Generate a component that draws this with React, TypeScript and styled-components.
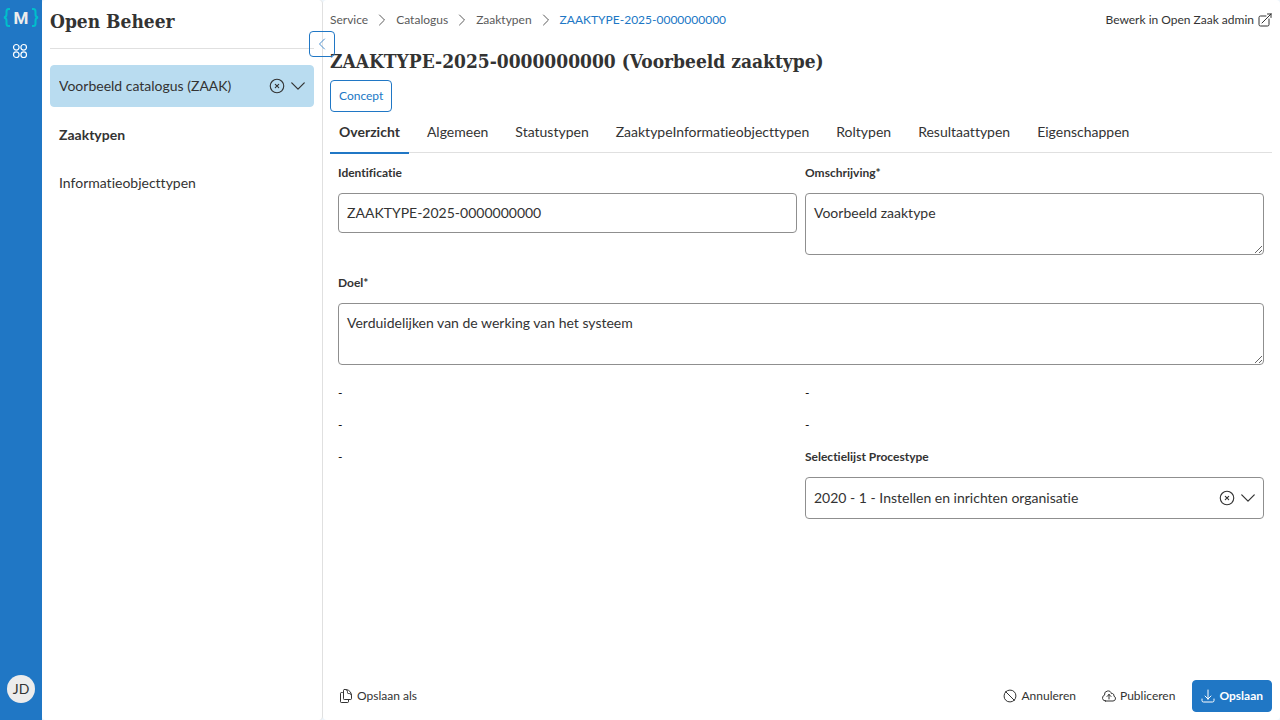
import React from "react";
import styled, { createGlobalStyle, css } from "styled-components";
import {
  HiOutlineArrowDownTray,
  HiOutlineArrowTopRightOnSquare,
  HiOutlineChevronDown,
  HiOutlineChevronLeft,
  HiOutlineChevronRight,
  HiOutlineCloudArrowUp,
  HiOutlineDocumentDuplicate,
  HiOutlineNoSymbol,
  HiOutlineXCircle,
} from "react-icons/hi2";

const color = {
  primary: "#2077c5",
  accent: "#00bfcb",
  selected: "#b9dcf0",
  text: "#333333",
  muted: "#5a5a5a",
  line: "#e0e0e0",
  border: "#8f8f8f",
};

const GlobalStyle = createGlobalStyle`
  *, *::before, *::after { box-sizing: border-box; }
  body {
    margin: 0;
    background: #eef5fb;
    color: ${color.text};
    font: 14px/20px Lato, "Liberation Sans", sans-serif;
    font-variant-ligatures: none;
  }
  button, input, select, textarea { font: inherit; font-variant-ligatures: none; color: inherit; }
  a { color: inherit; text-decoration: none; }
  svg { display: block; flex: none; }
`;

const Page = styled.div`
  display: flex;
  min-height: 100vh;
`;

const Rail = styled.nav`
  display: flex;
  flex-direction: column;
  align-items: center;
  flex: none;
  width: 42px;
  padding: 7px 0 17px;
  background: ${color.primary};
`;

const IconButton = styled.button`
  display: flex;
  padding: 0;
  border: 0;
  background: none;
  cursor: pointer;
`;

const AppsButton = styled(IconButton)`
  margin: 15px 2px 0 0;
  color: #fff;
`;

const Avatar = styled.button`
  width: 28px;
  height: 28px;
  margin-top: auto;
  padding: 0;
  border: 0;
  border-radius: 50%;
  background: #ececec;
  line-height: 28px;
`;

const Sidebar = styled.aside`
  position: relative;
  flex: none;
  width: 281px;
  padding: 8px;
  border-right: 1px solid ${color.line};
  border-radius: 4px;
  background: #fff;
`;

const headingFont = css`
  margin: 0;
  font: 700 19px/26px "Roboto Slab", "DejaVu Serif Condensed", "DejaVu Serif", serif;
`;

const Brand = styled.h2`
  ${headingFont}
  margin-bottom: 16px;
  padding-bottom: 14px;
  border-bottom: 1px solid ${color.line};
`;

const Collapse = styled.button`
  position: absolute;
  top: 31px;
  right: -13px;
  display: flex;
  align-items: center;
  justify-content: center;
  width: 26px;
  height: 26px;
  padding: 0;
  border: 1px solid ${color.primary};
  border-radius: 4px;
  background: transparent;
  color: #4a90d0;
`;

const SelectBox = styled.div<{ $filled?: boolean }>`
  display: flex;
  align-items: center;
  gap: 2px;
  height: 42px;
  padding: 0 5px 0 8px;
  border: 1px solid ${(p) => (p.$filled ? color.selected : color.border)};
  border-radius: 4px;
  background: ${(p) => (p.$filled ? color.selected : "#fff")};
`;

const Select = styled.select`
  flex: 1;
  min-width: 0;
  padding: 0;
  border: 0;
  appearance: none;
  background: transparent;
  outline: none;
`;

const SideNav = styled.nav`
  display: flex;
  flex-direction: column;
  gap: 8px;
`;

const SideLink = styled.a<{ $active?: boolean }>`
  padding: 10px 9px;
  font-weight: ${(p) => (p.$active ? 700 : 400)};
`;

const Main = styled.main`
  display: flex;
  flex-direction: column;
  flex: 1;
  min-width: 0;
  padding: 8px 8px 8px 7px;
  border-radius: 4px;
  background: #fff;
`;

const TopBar = styled.div`
  display: flex;
  align-items: center;
  justify-content: space-between;
  height: 24px;
  font-size: 12px;
`;

const Crumbs = styled.nav`
  display: flex;
  align-items: center;
  gap: 6px;
  color: ${color.muted};
`;

const Crumb = styled.a<{ $current?: boolean }>`
  color: ${(p) => (p.$current ? color.primary : "inherit")};
`;

const AdminLink = styled.a`
  display: flex;
  align-items: center;
  gap: 4px;
`;

/* The drawing of a 16px icon is inset, so its box is trimmed to 14px. */
const IconSlot = styled.span`
  display: flex;
  margin: 0 -1px;
`;

const Title = styled.h1`
  ${headingFont}
  margin-top: 16px;
`;

const Badge = styled.span`
  align-self: flex-start;
  margin-top: 6px;
  padding: 5px 8px;
  border: 1px solid ${color.primary};
  border-radius: 4px;
  color: ${color.primary};
  font-size: 12px;
`;

const Tabs = styled.div`
  display: flex;
  gap: 9px;
  height: 41px;
  border-bottom: 1px solid ${color.line};
`;

const Tab = styled.button<{ $active?: boolean }>`
  height: 42px;
  padding: 0 9px;
  border: 0;
  border-bottom: 2px solid ${(p) => (p.$active ? color.primary : "transparent")};
  background: none;
  font-weight: ${(p) => (p.$active ? 700 : 400)};
`;

const Form = styled.form`
  display: grid;
  grid-template-columns: 1fr 1fr;
  align-items: start;
  gap: 16px 8px;
  padding: 12px 8px;
`;

const Field = styled.div<{ $wide?: boolean; $multiline?: boolean }>`
  display: flex;
  flex-direction: column;
  gap: 12px;
  grid-column: ${(p) => (p.$wide ? "1 / -1" : "auto")};
  padding-bottom: ${(p) => (p.$multiline ? 4 : 0)}px;
`;

const Label = styled.label`
  font-size: 12px;
  font-weight: 700;
  line-height: 16px;
`;

const Empty = styled.span`
  color: #000;
  font-size: 12px;
  line-height: 16px;
`;

const control = css`
  width: 100%;
  padding: 8px;
  border: 1px solid ${color.border};
  border-radius: 4px;
  background: #fff;
  line-height: 22px;
  outline: none;
`;

const Input = styled.input`
  ${control}
  height: 40px;
  padding-bottom: 10px;
  line-height: 20px;
`;

const TextArea = styled.textarea`
  ${control}
  display: block;
  height: 62px;
`;

const Footer = styled.footer`
  display: flex;
  gap: 8px;
  margin-top: auto;
`;

const Spacer = styled.div`
  flex: 1;
`;

const Action = styled.button<{ $primary?: boolean }>`
  display: flex;
  align-items: center;
  gap: 4px;
  height: 32px;
  padding: 0 8px;
  border: 1px solid ${(p) => (p.$primary ? color.primary : "transparent")};
  border-radius: 4px;
  background: ${(p) => (p.$primary ? color.primary : "transparent")};
  color: ${(p) => (p.$primary ? "#fff" : color.text)};
  font-size: 12px;
  font-weight: ${(p) => (p.$primary ? 700 : 400)};
`;

const LogoLetter = styled.text`
  fill: #ececec;
  font: 700 17px Roboto, sans-serif;
  text-anchor: middle;
`;

const Logo = () => (
  <svg width="36" height="21" viewBox="0 0 36 21" fill="none" role="img" aria-label="Maykin">
    <g stroke={color.accent} strokeWidth="2">
      <path d="M7 2H5.500Q3.500 2 3.500 4.500v3Q3.500 10 1 10.500 3.500 11 3.500 13.500v3Q3.500 19 5.500 19H7" />
      <path d="M29 2h1.500q2 0 2 2.500v3q0 2.500 2.500 3-2.500.5-2.500 3v3q0 2.500-2 2.500H29" />
    </g>
    <LogoLetter x="18" y="17">
      M
    </LogoLetter>
  </svg>
);

const AppsIcon = () => (
  <svg width="16" height="16" viewBox="0 0 16 16" fill="none" stroke="currentColor" strokeWidth="1.200">
    <circle cx="4.300" cy="4.300" r="2.800" />
    <circle cx="11.700" cy="4.300" r="2.800" />
    <circle cx="4.300" cy="11.700" r="2.800" />
    <circle cx="11.700" cy="11.700" r="2.800" />
  </svg>
);

type PickerProps = { id: string; label?: string; value: string; filled?: boolean };

const Picker = ({ id, label, value, filled }: PickerProps) => (
  <SelectBox $filled={filled}>
    <Select id={id} aria-label={label} defaultValue={value}>
      <option>{value}</option>
    </Select>
    <IconButton type="button" aria-label="Wissen">
      <HiOutlineXCircle size={18} />
    </IconButton>
    <HiOutlineChevronDown size={20} />
  </SelectBox>
);

const tabs = [
  "Overzicht",
  "Algemeen",
  "Statustypen",
  "ZaaktypeInformatieobjecttypen",
  "Roltypen",
  "Resultaattypen",
  "Eigenschappen",
];

const parents = ["Service", "Catalogus", "Zaaktypen"];

export default function App() {
  return (
    <Page>
      <GlobalStyle />
      <Rail aria-label="Hoofdmenu">
        <Logo />
        <AppsButton aria-label="Applicaties">
          <AppsIcon />
        </AppsButton>
        <Avatar>JD</Avatar>
      </Rail>

      <Sidebar>
        <Brand>Open Beheer</Brand>
        <Collapse aria-label="Zijbalk inklappen">
          <HiOutlineChevronLeft size={16} />
        </Collapse>
        <SideNav aria-label="Catalogus">
          <Picker id="catalogus" label="Catalogus" value="Voorbeeld catalogus (ZAAK)" filled />
          <SideLink href="#zaaktypen" $active>
            Zaaktypen
          </SideLink>
          <SideLink href="#informatieobjecttypen">Informatieobjecttypen</SideLink>
        </SideNav>
      </Sidebar>

      <Main>
        <TopBar>
          <Crumbs aria-label="Kruimelpad">
            {parents.map((name) => (
              <React.Fragment key={name}>
                <Crumb href="#">{name}</Crumb>
                <HiOutlineChevronRight size={16} />
              </React.Fragment>
            ))}
            <Crumb href="#" $current>
              ZAAKTYPE-2025-0000000000
            </Crumb>
          </Crumbs>
          <AdminLink href="#">
            Bewerk in Open Zaak admin
            <IconSlot>
              <HiOutlineArrowTopRightOnSquare size={16} />
            </IconSlot>
          </AdminLink>
        </TopBar>

        <Title>ZAAKTYPE-2025-0000000000 (Voorbeeld zaaktype)</Title>
        <Badge>Concept</Badge>

        <Tabs role="tablist">
          {tabs.map((name, i) => (
            <Tab key={name} role="tab" aria-selected={i === 0} $active={i === 0}>
              {name}
            </Tab>
          ))}
        </Tabs>

        <Form>
          <Field>
            <Label htmlFor="identificatie">Identificatie</Label>
            <Input id="identificatie" defaultValue="ZAAKTYPE-2025-0000000000" />
          </Field>
          <Field $multiline>
            <Label htmlFor="omschrijving">Omschrijving*</Label>
            <TextArea id="omschrijving" defaultValue="Voorbeeld zaaktype" />
          </Field>
          <Field $wide $multiline>
            <Label htmlFor="doel">Doel*</Label>
            <TextArea id="doel" defaultValue="Verduidelijken van de werking van het systeem" />
          </Field>
          <Empty>-</Empty>
          <Empty>-</Empty>
          <Empty>-</Empty>
          <Empty>-</Empty>
          <Empty>-</Empty>
          <Field>
            <Label htmlFor="procestype">Selectielijst Procestype</Label>
            <Picker id="procestype" value="2020 - 1 - Instellen en inrichten organisatie" />
          </Field>
        </Form>

        <Footer>
          <Action type="button">
            <IconSlot>
              <HiOutlineDocumentDuplicate size={16} />
            </IconSlot>
            Opslaan als
          </Action>
          <Spacer />
          <Action type="button">
            <IconSlot>
              <HiOutlineNoSymbol size={16} />
            </IconSlot>
            Annuleren
          </Action>
          <Action type="button">
            <IconSlot>
              <HiOutlineCloudArrowUp size={16} />
            </IconSlot>
            Publiceren
          </Action>
          <Action type="button" $primary>
            <IconSlot>
              <HiOutlineArrowDownTray size={16} />
            </IconSlot>
            Opslaan
          </Action>
        </Footer>
      </Main>
    </Page>
  );
}
